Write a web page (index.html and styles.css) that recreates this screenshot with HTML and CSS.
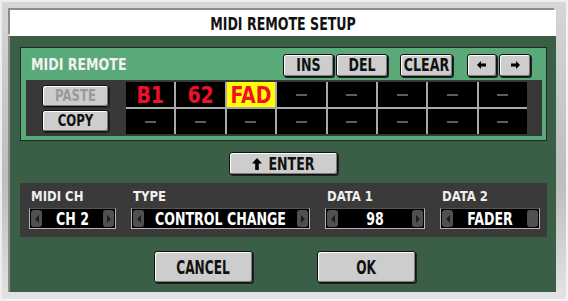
FILE: index.html
```html
<!DOCTYPE html>
<html lang="en">
<head>
    <meta charset="UTF-8">
    <title>MIDI Remote Setup</title>
    <link rel="stylesheet" href="styles.css">
</head>
<body>
<div class="window">
    <div class="title"><span class="t">MIDI REMOTE SETUP</span></div>
    <div class="body">
        <div class="panel">
            <div class="panel-head">
                <span class="panel-label"><span class="t t-low">MIDI REMOTE</span></span>
                <div class="tools">
                    <button class="btn btn-ins"><span class="t">INS</span></button>
                    <button class="btn btn-del"><span class="t">DEL</span></button>
                    <button class="btn btn-clear"><span class="t">CLEAR</span></button>
                    <button class="btn btn-arrow btn-left">
                        <svg width="10" height="8" viewBox="0 0 10 8"><path d="M0 4 L4 0 L4 2.5 L9 2.5 L9 5.5 L4 5.5 L4 8 Z" fill="#000"/></svg>
                    </button>
                    <button class="btn btn-arrow btn-right">
                        <svg width="10" height="8" viewBox="0 0 10 8"><path d="M10 4 L6 0 L6 2.5 L1 2.5 L1 5.5 L6 5.5 L6 8 Z" fill="#000"/></svg>
                    </button>
                </div>
            </div>
            <div class="remote">
                <div class="clip">
                    <button class="btn btn-clip" disabled><span class="t">PASTE</span></button>
                    <button class="btn btn-clip"><span class="t">COPY</span></button>
                </div>
                <div class="grid">
                    <div class="cell red"><span class="t t-low">B1</span></div>
                    <div class="cell red"><span class="t t-low">62</span></div>
                    <div class="cell red active"><span class="t t-low">FAD</span></div>
                    <div class="cell"><span class="dash"></span></div>
                    <div class="cell"><span class="dash"></span></div>
                    <div class="cell"><span class="dash"></span></div>
                    <div class="cell"><span class="dash"></span></div>
                    <div class="cell"><span class="dash"></span></div>
                    <div class="cell"><span class="dash"></span></div>
                    <div class="cell"><span class="dash"></span></div>
                    <div class="cell"><span class="dash"></span></div>
                    <div class="cell"><span class="dash"></span></div>
                    <div class="cell"><span class="dash"></span></div>
                    <div class="cell"><span class="dash"></span></div>
                    <div class="cell"><span class="dash"></span></div>
                    <div class="cell"><span class="dash"></span></div>
                </div>
            </div>
        </div>

        <div class="enter-row">
            <button class="btn btn-enter">
                <svg width="10" height="12" viewBox="0 0 10 12"><path d="M5 0 L10 5.5 L6.8 5.5 L6.8 12 L3.2 12 L3.2 5.5 L0 5.5 Z" fill="#000"/></svg>
                <span class="t">ENTER</span>
            </button>
        </div>

        <div class="params">
            <div class="param param-ch">
                <div class="param-label"><span class="t t-low">MIDI CH</span></div>
                <div class="field">
                    <span class="knob"><span class="tri-left"></span></span>
                    <span class="value"><span class="t">CH 2</span></span>
                    <span class="knob"><span class="tri-right"></span></span>
                </div>
            </div>
            <div class="param param-type">
                <div class="param-label"><span class="t t-low">TYPE</span></div>
                <div class="field">
                    <span class="knob"><span class="tri-left"></span></span>
                    <span class="value"><span class="t">CONTROL CHANGE</span></span>
                    <span class="knob"><span class="tri-right"></span></span>
                </div>
            </div>
            <div class="param param-data">
                <div class="param-label"><span class="t t-low">DATA 1</span></div>
                <div class="field">
                    <span class="knob"><span class="tri-left"></span></span>
                    <span class="value"><span class="t">98</span></span>
                    <span class="knob"><span class="tri-right"></span></span>
                </div>
            </div>
            <div class="param param-data">
                <div class="param-label"><span class="t t-low">DATA 2</span></div>
                <div class="field">
                    <span class="knob"><span class="tri-left"></span></span>
                    <span class="value"><span class="t">FADER</span></span>
                    <span class="knob"></span>
                </div>
            </div>
        </div>

        <div class="actions">
            <button class="btn btn-big"><span class="t t-tall">CANCEL</span></button>
            <button class="btn btn-big"><span class="t t-tall">OK</span></button>
        </div>
    </div>
</div>
</body>
</html>
```

FILE: styles.css
```css
html, body {
    margin: 0;
    padding: 0;
    background: #fff;
}
body {
    font-family: "DejaVu Sans Condensed", "DejaVu Sans", sans-serif;
    font-stretch: condensed;
    font-weight: bold;
}
/* the console font is narrow and tall */
.t {
    display: inline-block;
    transform: scaleY(1.25);
}
.t-low {
    transform: scaleY(1.12);
}
.t-tall {
    transform: scaleY(1.45);
}
.window {
    width: 568px;
    height: 301px;
    box-sizing: border-box;
    padding: 10px 12px 9px 10px;
    background: linear-gradient(#d6d6d6, #bdbdbd 60%, #e4e4e4);
    box-shadow: inset 2px 2px 0 #eeeeee, inset -2px -2px 0 #f4f4f4;
}
.title {
    height: 26px;
    background: #fff;
    color: #111;
    font-size: 14px;
    line-height: 28px;
    text-align: center;
    box-shadow: -2px -2px 0 #8c8c8c;
}
.body {
    height: 256px;
    background: #3b5e46;
    padding: 11px 9px 0 10px;
    box-sizing: border-box;
    box-shadow: -2px 0 0 #8c8c8c;
}
.btn {
    font-family: inherit;
    font-stretch: condensed;
    font-weight: bold;
    color: #111;
    background: #cdcdcd;
    border: 1px solid #111;
    border-radius: 3px;
    padding: 0;
    margin: 0;
    box-sizing: border-box;
    box-shadow: inset 1px 1px 0 #fff, inset -1px -1px 0 #7d7d7d, 1px 1px 0 #222;
    display: flex;
    align-items: center;
    justify-content: center;
    cursor: pointer;
}
.panel {
    height: 94px;
    box-sizing: border-box;
    border: 1px solid #1c2a20;
    background: #5aa978;
}
.panel-head {
    height: 32px;
    display: flex;
    align-items: center;
    padding: 0 15px 0 10px;
}
.panel-label {
    color: #f2f2f2;
    font-size: 14px;
    flex: 1;
}
.tools {
    display: flex;
    margin-top: 2px;
}
.tools .btn {
    height: 23px;
    font-size: 14px;
}
.btn-ins { width: 51px; }
.btn-del { width: 52px; margin-left: 2px; }
.btn-clear { width: 53px; margin-left: 12px; }
.btn-left { width: 30px; margin-left: 14px; }
.btn-right { width: 32px; margin-left: 2px; }
.remote {
    height: 56px;
    margin: 0 4px 0 5px;
    background: #383838;
    display: flex;
    align-items: center;
    padding-left: 16px;
}
.clip {
    display: flex;
    flex-direction: column;
    gap: 3px;
}
.btn-clip {
    width: 67px;
    height: 22px;
    font-size: 13px;
}
.btn-clip:disabled {
    color: #9a9a9a;
}
.grid {
    margin-left: 17px;
    width: 401px;
    height: 52px;
    display: grid;
    grid-template-columns: repeat(8, 1fr);
    grid-template-rows: 1fr 1fr;
    gap: 2px;
    background: #a9a9a9;
}
.cell {
    background: #000;
    display: flex;
    align-items: center;
    justify-content: center;
    font-size: 21px;
}
.cell.red {
    color: #f0102a;
}
.cell.active {
    background: #ffff00;
}
.dash {
    width: 11px;
    height: 2px;
    background: #5e5e5e;
}
.enter-row {
    display: flex;
    justify-content: center;
    margin-top: 11px;
}
.btn-enter {
    width: 109px;
    height: 23px;
    font-size: 14px;
    gap: 6px;
}
.params {
    height: 54px;
    margin-top: 8px;
    background: #3a3a3a;
    box-sizing: border-box;
    padding: 6px 0 0 9px;
    display: flex;
    gap: 15px;
}
.param-label {
    color: #f0f0f0;
    font-size: 13px;
    line-height: 16px;
    padding-left: 2px;
    margin-bottom: 3px;
}
.param-ch .field { width: 87px; }
.param-type .field { width: 179px; }
.param-data .field { width: 100px; }
.field {
    height: 21px;
    box-sizing: border-box;
    background: #000;
    border: 1px solid #b4b4b4;
    border-top-color: #555;
    display: flex;
    align-items: center;
    padding: 0 1px;
}
.field .value {
    flex: 1;
    text-align: center;
    color: #fff;
    font-size: 14px;
}
.field .t {
    transform: scaleY(1.2);
}
.knob {
    width: 11px;
    height: 17px;
    border-radius: 3px;
    background: #505050;
    display: flex;
    align-items: center;
    justify-content: center;
}
.tri-left, .tri-right {
    width: 0;
    height: 0;
    border-top: 4px solid transparent;
    border-bottom: 4px solid transparent;
}
.tri-left {
    border-right: 4px solid #1c1c1c;
}
.tri-right {
    border-left: 4px solid #1c1c1c;
}
.actions {
    display: flex;
    justify-content: center;
    gap: 64px;
    margin-top: 14px;
    padding-left: 2px;
}
.btn-big {
    width: 99px;
    height: 32px;
    font-size: 13.5px;
}
```
